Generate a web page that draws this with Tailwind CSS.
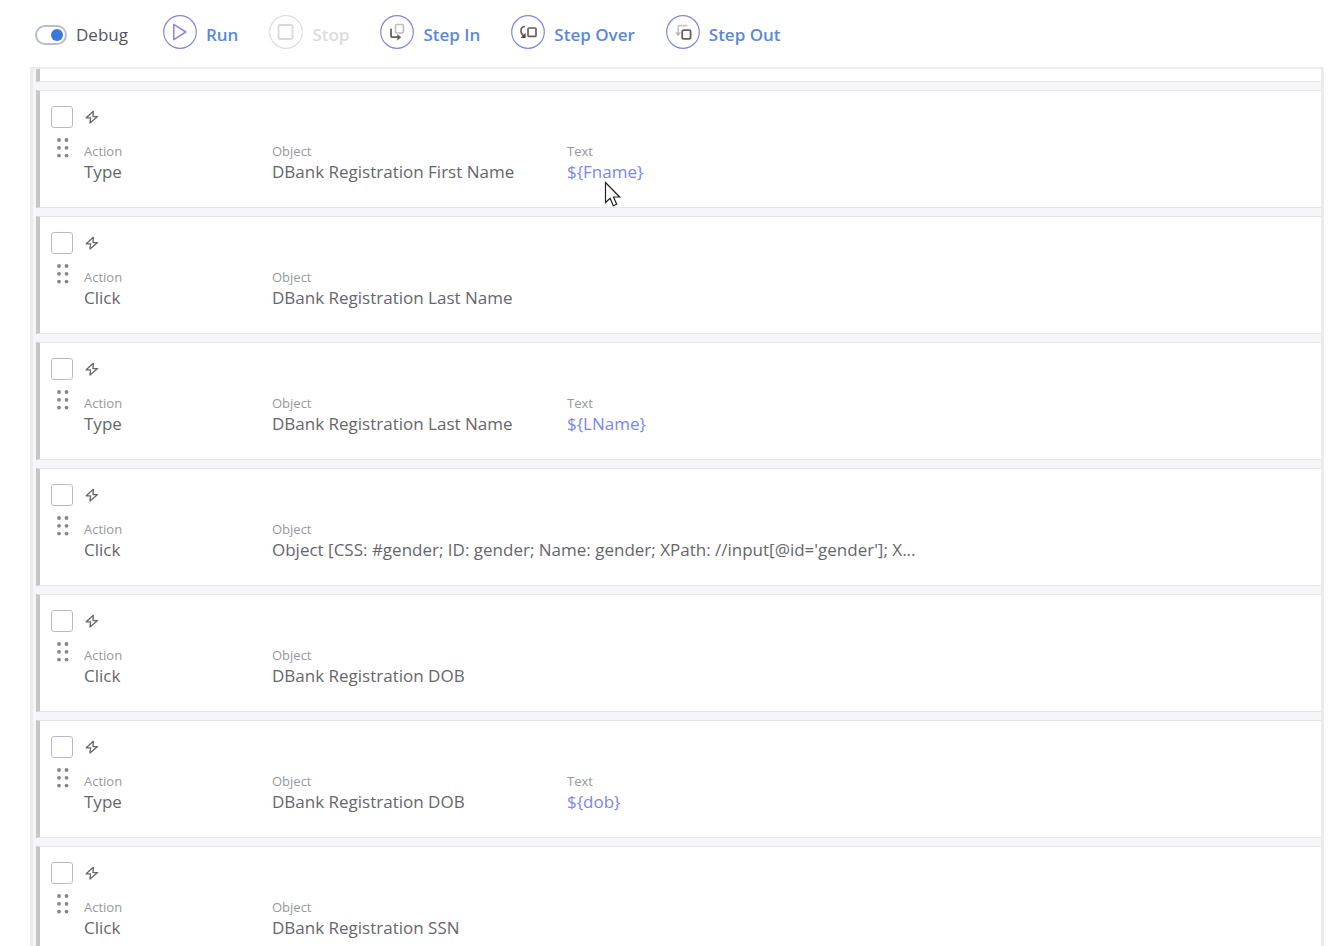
<!DOCTYPE html>
<html lang="en">
<head>
    <meta charset="UTF-8">
    <meta name="viewport" content="width=device-width, initial-scale=1.0">
    <title>Debug</title>
    <script src="https://cdn.jsdelivr.net/npm/@tailwindcss/browser@4"></script>
</head>
<body class="bg-white text-[#66666b] font-['Open_Sans',sans-serif] h-screen flex flex-col overflow-hidden">
    <!-- Shared icons -->
    <svg class="hidden">
        <symbol id="bolt" viewBox="0 0 14 16">
            <path d="M8.3 2.3 1.2 8.8h4.4L5 14l7.6-6.4H8z" fill="none" stroke="#67676b" stroke-width="1.3" stroke-linejoin="round"/>
        </symbol>
        <symbol id="grip" viewBox="0 0 14 22">
            <g fill="#85858a">
                <circle cx="4" cy="3" r="1.9"/><circle cx="11.5" cy="3" r="1.9"/>
                <circle cx="4" cy="10.8" r="1.9"/><circle cx="11.5" cy="10.8" r="1.9"/>
                <circle cx="4" cy="18.6" r="1.9"/><circle cx="11.5" cy="18.6" r="1.9"/>
            </g>
        </symbol>
    </svg>

    <header class="flex items-start gap-[31px] pl-[35px] pt-[15px] h-[67px] shrink-0 text-[17px] leading-6 font-semibold text-[#5a88dd]">
        <label class="flex items-center gap-[9px] pt-2 pr-1 font-normal text-[#55555a]">
            <input type="checkbox" checked class="appearance-none relative w-8 h-5 rounded-full border-2 border-[#b9bdd2] bg-white before:absolute before:right-[2px] before:top-[2px] before:size-3 before:rounded-full before:bg-[#3b78de]">
            Debug
        </label>
        <button type="button" class="flex items-start gap-[9px]">
            <svg class="size-[34px]" viewBox="0 0 34 34" fill="none">
                <circle cx="17" cy="17" r="16.3" stroke="#7f86e0" stroke-width="1.2"/>
                <path d="M10.8 9.3v15.4L22.8 17z" stroke="#8a86e4" stroke-width="1.5" stroke-linejoin="round"/>
            </svg>
            <span class="pt-2">Run</span>
        </button>
        <button type="button" disabled class="flex items-start gap-[9px] text-[#dcdcdc]">
            <svg class="size-[34px]" viewBox="0 0 34 34" fill="none">
                <circle cx="17" cy="17" r="16.3" stroke="#dedede" stroke-width="1.2"/>
                <rect x="9.5" y="10" width="14" height="14" rx="1.5" stroke="#d8d8d8" stroke-width="1.8"/>
            </svg>
            <span class="pt-2">Stop</span>
        </button>
        <button type="button" class="flex items-start gap-[9px]">
            <svg class="size-[34px]" viewBox="0 0 34 34" fill="none">
                <circle cx="17" cy="17" r="16.3" stroke="#7f86e0" stroke-width="1.2"/>
                <rect x="15.5" y="9.5" width="8" height="8.5" rx="1.5" stroke="#bdbdc0" stroke-width="1.6"/>
                <path d="M11 13.8v6.7q0 1.7 1.7 1.7h6" stroke="#67605f" stroke-width="1.8"/>
                <path d="M17.3 19v6.4l4-3.2z" fill="#67605f"/>
            </svg>
            <span class="pt-2">Step In</span>
        </button>
        <button type="button" class="flex items-start gap-[9px]">
            <svg class="size-[34px]" viewBox="0 0 34 34" fill="none">
                <circle cx="17" cy="17" r="16.3" stroke="#7f86e0" stroke-width="1.2"/>
                <rect x="17" y="13" width="8" height="8.4" rx="1" stroke="#67605f" stroke-width="1.7"/>
                <path d="M14 11.5c-2.8 0-4 1.6-4 4s.7 4 2.4 5" stroke="#67605f" stroke-width="1.7"/>
                <path d="M14.6 17.8v5.2h-5z" fill="#4c4747"/>
            </svg>
            <span class="pt-2">Step Over</span>
        </button>
        <button type="button" class="flex items-start gap-[9px]">
            <svg class="size-[34px]" viewBox="0 0 34 34" fill="none">
                <circle cx="17" cy="17" r="16.3" stroke="#7f86e0" stroke-width="1.2"/>
                <path d="M21.5 10.7h-8.3q-1 0-1 1v7" stroke="#c9c6c6" stroke-width="1.8"/>
                <path d="M9 17.5h6.2l-3.1 3.8z" fill="#bab5b5"/>
                <rect x="16.2" y="15.2" width="8.4" height="8.6" rx="1.3" stroke="#67605f" stroke-width="1.8"/>
            </svg>
            <span class="pt-2">Step Out</span>
        </button>
    </header>

    <main class="flex-1 min-h-0 overflow-hidden ml-[30px] mr-[18px] pl-[3px] border-x-3 border-t-2 border-[#ebebeb] bg-[#f6f6f8]">
        <ul class="flex flex-col gap-2">
            <li class="h-[13px] bg-white border-b border-b-[#e6e6e8] border-l-4 border-l-[#c6c6c6]"></li>

            <li class="h-[118px] shrink-0 flex gap-[11px] pl-[11px] pt-[15px] bg-white border-y border-y-[#e6e6e8] border-l-4 border-l-[#c6c6c6]">
                <div class="w-[22px] flex flex-col items-center gap-[9px]">
                    <input type="checkbox" aria-label="Select step" class="appearance-none size-[22px] rounded-[3px] border border-[#b9b8ca] bg-white">
                    <svg class="w-[14px] h-[22px]"><use href="#grip"/></svg>
                </div>
                <div class="flex-1">
                    <svg class="w-[14px] h-4 mt-[3px] ml-[1px]"><use href="#bolt"/></svg>
                    <dl class="grid grid-cols-[188px_295px_1fr] mt-4">
                        <div><dt class="text-[13px] leading-5 text-[#98989c]">Action</dt><dd class="text-[17px] leading-[22px]">Type</dd></div>
                        <div><dt class="text-[13px] leading-5 text-[#98989c]">Object</dt><dd class="text-[17px] leading-[22px]">DBank Registration First Name</dd></div>
                        <div><dt class="text-[13px] leading-5 text-[#98989c]">Text</dt><dd class="text-[17px] leading-[22px] text-[#7a86ee]">${Fname}</dd></div>
                    </dl>
                </div>
            </li>

            <li class="h-[118px] shrink-0 flex gap-[11px] pl-[11px] pt-[15px] bg-white border-y border-y-[#e6e6e8] border-l-4 border-l-[#c6c6c6]">
                <div class="w-[22px] flex flex-col items-center gap-[9px]">
                    <input type="checkbox" aria-label="Select step" class="appearance-none size-[22px] rounded-[3px] border border-[#b9b8ca] bg-white">
                    <svg class="w-[14px] h-[22px]"><use href="#grip"/></svg>
                </div>
                <div class="flex-1">
                    <svg class="w-[14px] h-4 mt-[3px] ml-[1px]"><use href="#bolt"/></svg>
                    <dl class="grid grid-cols-[188px_295px_1fr] mt-4">
                        <div><dt class="text-[13px] leading-5 text-[#98989c]">Action</dt><dd class="text-[17px] leading-[22px]">Click</dd></div>
                        <div><dt class="text-[13px] leading-5 text-[#98989c]">Object</dt><dd class="text-[17px] leading-[22px]">DBank Registration Last Name</dd></div>
                    </dl>
                </div>
            </li>

            <li class="h-[118px] shrink-0 flex gap-[11px] pl-[11px] pt-[15px] bg-white border-y border-y-[#e6e6e8] border-l-4 border-l-[#c6c6c6]">
                <div class="w-[22px] flex flex-col items-center gap-[9px]">
                    <input type="checkbox" aria-label="Select step" class="appearance-none size-[22px] rounded-[3px] border border-[#b9b8ca] bg-white">
                    <svg class="w-[14px] h-[22px]"><use href="#grip"/></svg>
                </div>
                <div class="flex-1">
                    <svg class="w-[14px] h-4 mt-[3px] ml-[1px]"><use href="#bolt"/></svg>
                    <dl class="grid grid-cols-[188px_295px_1fr] mt-4">
                        <div><dt class="text-[13px] leading-5 text-[#98989c]">Action</dt><dd class="text-[17px] leading-[22px]">Type</dd></div>
                        <div><dt class="text-[13px] leading-5 text-[#98989c]">Object</dt><dd class="text-[17px] leading-[22px]">DBank Registration Last Name</dd></div>
                        <div><dt class="text-[13px] leading-5 text-[#98989c]">Text</dt><dd class="text-[17px] leading-[22px] text-[#7a86ee]">${LName}</dd></div>
                    </dl>
                </div>
            </li>

            <li class="h-[118px] shrink-0 flex gap-[11px] pl-[11px] pt-[15px] bg-white border-y border-y-[#e6e6e8] border-l-4 border-l-[#c6c6c6]">
                <div class="w-[22px] flex flex-col items-center gap-[9px]">
                    <input type="checkbox" aria-label="Select step" class="appearance-none size-[22px] rounded-[3px] border border-[#b9b8ca] bg-white">
                    <svg class="w-[14px] h-[22px]"><use href="#grip"/></svg>
                </div>
                <div class="flex-1">
                    <svg class="w-[14px] h-4 mt-[3px] ml-[1px]"><use href="#bolt"/></svg>
                    <dl class="grid grid-cols-[188px_295px_1fr] mt-4">
                        <div><dt class="text-[13px] leading-5 text-[#98989c]">Action</dt><dd class="text-[17px] leading-[22px]">Click</dd></div>
                        <div class="col-span-2"><dt class="text-[13px] leading-5 text-[#98989c]">Object</dt><dd class="text-[17px] leading-[22px]">Object [CSS: #gender; ID: gender; Name: gender; XPath: //input[@id='gender']; X...</dd></div>
                    </dl>
                </div>
            </li>

            <li class="h-[118px] shrink-0 flex gap-[11px] pl-[11px] pt-[15px] bg-white border-y border-y-[#e6e6e8] border-l-4 border-l-[#c6c6c6]">
                <div class="w-[22px] flex flex-col items-center gap-[9px]">
                    <input type="checkbox" aria-label="Select step" class="appearance-none size-[22px] rounded-[3px] border border-[#b9b8ca] bg-white">
                    <svg class="w-[14px] h-[22px]"><use href="#grip"/></svg>
                </div>
                <div class="flex-1">
                    <svg class="w-[14px] h-4 mt-[3px] ml-[1px]"><use href="#bolt"/></svg>
                    <dl class="grid grid-cols-[188px_295px_1fr] mt-4">
                        <div><dt class="text-[13px] leading-5 text-[#98989c]">Action</dt><dd class="text-[17px] leading-[22px]">Click</dd></div>
                        <div><dt class="text-[13px] leading-5 text-[#98989c]">Object</dt><dd class="text-[17px] leading-[22px]">DBank Registration DOB</dd></div>
                    </dl>
                </div>
            </li>

            <li class="h-[118px] shrink-0 flex gap-[11px] pl-[11px] pt-[15px] bg-white border-y border-y-[#e6e6e8] border-l-4 border-l-[#c6c6c6]">
                <div class="w-[22px] flex flex-col items-center gap-[9px]">
                    <input type="checkbox" aria-label="Select step" class="appearance-none size-[22px] rounded-[3px] border border-[#b9b8ca] bg-white">
                    <svg class="w-[14px] h-[22px]"><use href="#grip"/></svg>
                </div>
                <div class="flex-1">
                    <svg class="w-[14px] h-4 mt-[3px] ml-[1px]"><use href="#bolt"/></svg>
                    <dl class="grid grid-cols-[188px_295px_1fr] mt-4">
                        <div><dt class="text-[13px] leading-5 text-[#98989c]">Action</dt><dd class="text-[17px] leading-[22px]">Type</dd></div>
                        <div><dt class="text-[13px] leading-5 text-[#98989c]">Object</dt><dd class="text-[17px] leading-[22px]">DBank Registration DOB</dd></div>
                        <div><dt class="text-[13px] leading-5 text-[#98989c]">Text</dt><dd class="text-[17px] leading-[22px] text-[#7a86ee]">${dob}</dd></div>
                    </dl>
                </div>
            </li>

            <li class="h-[118px] shrink-0 flex gap-[11px] pl-[11px] pt-[15px] bg-white border-y border-y-[#e6e6e8] border-l-4 border-l-[#c6c6c6]">
                <div class="w-[22px] flex flex-col items-center gap-[9px]">
                    <input type="checkbox" aria-label="Select step" class="appearance-none size-[22px] rounded-[3px] border border-[#b9b8ca] bg-white">
                    <svg class="w-[14px] h-[22px]"><use href="#grip"/></svg>
                </div>
                <div class="flex-1">
                    <svg class="w-[14px] h-4 mt-[3px] ml-[1px]"><use href="#bolt"/></svg>
                    <dl class="grid grid-cols-[188px_295px_1fr] mt-4">
                        <div><dt class="text-[13px] leading-5 text-[#98989c]">Action</dt><dd class="text-[17px] leading-[22px]">Click</dd></div>
                        <div><dt class="text-[13px] leading-5 text-[#98989c]">Object</dt><dd class="text-[17px] leading-[22px]">DBank Registration SSN</dd></div>
                    </dl>
                </div>
            </li>
        </ul>
    </main>

    <!-- Mouse pointer -->
    <svg class="absolute left-[604px] top-[181px] w-[18px] h-[27px]" viewBox="0 0 18 27">
        <path d="M1.5 1.5v20l4.6-4.3 3.2 7.5 3.4-1.5-3.2-7.2h6.2z" fill="#fff" stroke="#222" stroke-width="1.2"/>
    </svg>
</body>
</html>
